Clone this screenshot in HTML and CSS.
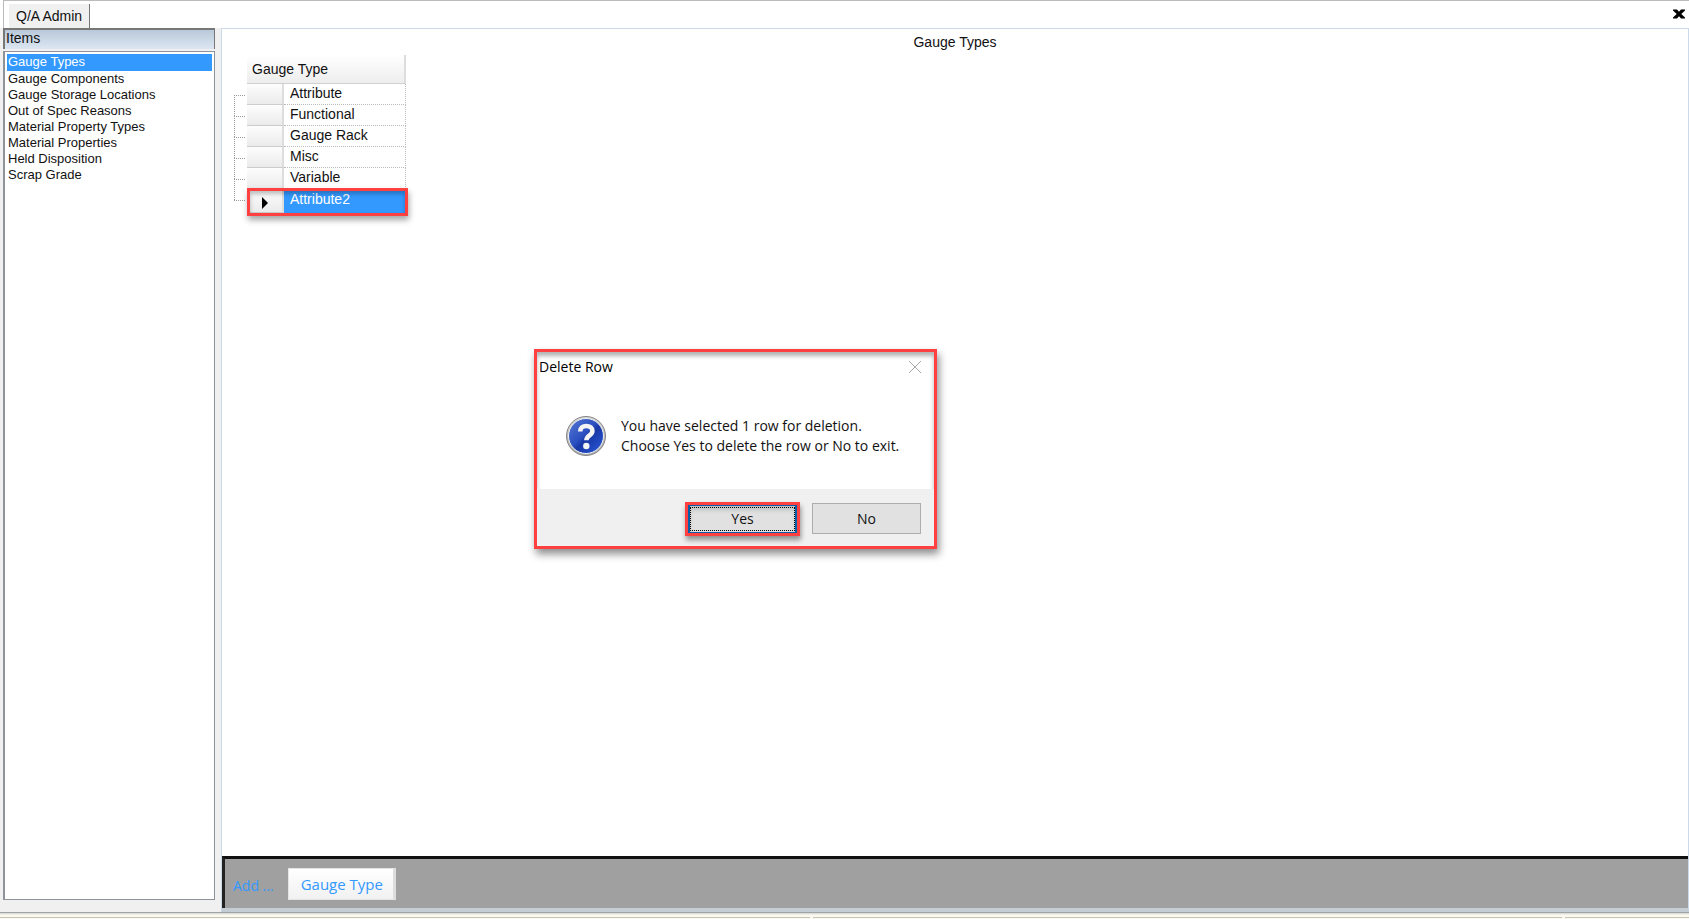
FILE: index.html
```html
<!DOCTYPE html>
<html lang="en">
<head>
<meta charset="utf-8">
<title>Q/A Admin</title>
<link rel="stylesheet" href="styles.css">
</head>
<body>
<div class="app">
  <header class="tabs">
    <button class="tab" type="button">Q/A Admin</button>
    <button class="close" type="button" aria-label="Close tab">
      <svg width="12" height="10" viewBox="0 0 12 10"><path d="M0 .5h4l2 2.300L8 .5h4v1L8.300 5 12 8.500v1H8L6 7.200 4 9.500H0v-1L3.700 5 0 1.500z" fill="#000"/></svg>
    </button>
  </header>
  <div class="body">
    <aside class="sidebar">
      <h2 class="items-title">Items</h2>
      <nav class="items">
        <a class="item selected" href="#">Gauge Types</a>
        <a class="item" href="#">Gauge Components</a>
        <a class="item" href="#">Gauge Storage Locations</a>
        <a class="item" href="#">Out of Spec Reasons</a>
        <a class="item" href="#">Material Property Types</a>
        <a class="item" href="#">Material Properties</a>
        <a class="item" href="#">Held Disposition</a>
        <a class="item" href="#">Scrap Grade</a>
      </nav>
    </aside>
    <main class="main">
      <h1 class="title">Gauge Types</h1>
      <div class="sheet">
        <table class="grid">
          <thead>
            <tr><td class="tree-head"></td><th colspan="2" scope="col">Gauge Type</th></tr>
          </thead>
          <tbody>
            <tr><td class="tree"></td><td class="handle"></td><td class="cell">Attribute</td></tr>
            <tr><td class="tree"></td><td class="handle"></td><td class="cell">Functional</td></tr>
            <tr><td class="tree"></td><td class="handle"></td><td class="cell">Gauge Rack</td></tr>
            <tr><td class="tree"></td><td class="handle"></td><td class="cell">Misc</td></tr>
            <tr><td class="tree"></td><td class="handle"></td><td class="cell">Variable</td></tr>
            <tr class="current"><td class="tree"></td><td class="handle"><svg width="6" height="12" viewBox="0 0 6 12"><path d="M0 0l6 6-6 6z" fill="#000"/></svg></td><td class="cell">Attribute2</td></tr>
          </tbody>
        </table>
      </div>
      <footer class="addbar">
        <span class="add-label">Add ...</span>
        <button class="add-button" type="button">Gauge Type</button>
      </footer>
    </main>
  </div>
  <div class="status"><span class="pane wide"></span><span class="pane middle"></span><span class="pane small"></span></div>
</div>
<section class="dialog" role="dialog" aria-labelledby="dialog-title">
  <div class="dialog-bar">
    <h2 class="dialog-title" id="dialog-title">Delete Row</h2>
    <button class="dialog-close" type="button" aria-label="Close">
      <svg width="14" height="14" viewBox="0 0 14 14"><path d="M1 1l12 12M13 1L1 13" stroke="#aaa" fill="none"/></svg>
    </button>
  </div>
  <div class="dialog-body">
    <svg width="42" height="42" viewBox="0 0 42 42">
      <defs>
        <linearGradient id="ball" x1="0" y1="0" x2="1" y2="1"><stop offset="0" stop-color="#5579d2"/><stop offset=".45" stop-color="#2b4fc0"/><stop offset=".55" stop-color="#1838a4"/><stop offset="1" stop-color="#2c5be0"/></linearGradient>
        <linearGradient id="rim" x1="0" y1="0" x2="0" y2="1"><stop offset="0" stop-color="#d9d9d9"/><stop offset="1" stop-color="#a9a9a9"/></linearGradient>
      </defs>
      <circle cx="21" cy="21" r="19.500" fill="url(#rim)" stroke="#858585"/>
      <circle cx="21" cy="21" r="17.500" fill="url(#ball)" stroke="#f2f2f2" stroke-width="1"/>
      <path d="M15.200 16.500c0-4 2.800-5.500 6-5.500 3.800 0 6.200 2 6.200 5 0 4.500-6 4.300-6 9.300" fill="none" stroke="#f4f4f4" stroke-width="4.600"/>
      <circle cx="21.300" cy="31" r="3.200" fill="#f4f4f4"/>
    </svg>
    <p class="message">You have selected 1 row for deletion.<br>Choose Yes to delete the row or No to exit.</p>
  </div>
  <div class="dialog-actions">
    <div class="callout"><button class="button yes" type="button">Yes</button></div>
    <button class="button no" type="button">No</button>
  </div>
</section>
</body>
</html>
```
FILE: styles.css
```css
* { box-sizing: border-box; }
body {
  margin: 0;
  font: 14px/16px "Liberation Sans", Arial, sans-serif;
  color: #111;
  background: #fff;
}
h1, h2, p { margin: 0; font-size: inherit; font-weight: normal; }
button { margin: 0; padding: 0; font: inherit; color: inherit; border: 0; background: none; }
svg { display: block; }

.app { display: flex; flex-direction: column; height: 100vh; overflow: hidden; }

.tabs {
  display: flex;
  justify-content: space-between;
  align-items: center;
  flex: none;
  height: 28px;
  margin-left: 3px;
  padding: 0 4px 2px 5px;
  border-top: 1px solid #bbb;
  border-left: 1px solid #bbb;
}
.tab {
  align-self: flex-end;
  height: 24px;
  margin-bottom: -2px;
  padding: 0 7px 1px;
  background: #f0f0f0;
  border-right: 1px solid #777;
}

.body { display: flex; flex: 1; min-height: 0; background: #f0f0f0; border-bottom: 1px solid #a0a4a8; }
.sidebar {
  display: flex;
  flex-direction: column;
  flex: none;
  gap: 2px;
  width: 212px;
  margin: 0 6px 12px 3px;
}
.items-title {
  height: 21px;
  padding: 0 1px;
  background: linear-gradient(#b9c9d9, #dce6f2);
  border: 2px solid #777;
  border-width: 2px 1px 0 2px;
}
.items {
  flex: 1;
  padding: 2px;
  font-size: 13px;
  background: #fff;
  border: 1px solid #8e9299;
  border-width: 1px 1px 1px 2px;
}
.item { display: block; padding-left: 1px; color: #111; text-decoration: none; }
.item.selected { padding-bottom: 1px; color: #fff; background: #3399ff; }

.main {
  display: flex;
  flex-direction: column;
  flex: 1;
  background: #fff;
  border: 1px solid #cbd9e8;
  border-bottom: 4px solid #c4ccd4;
}
.title { padding-top: 5px; text-align: center; }
.sheet { flex: 1; padding: 5px 12px; }

.grid { border-collapse: separate; border-spacing: 0; }
.grid td, .grid th { padding: 0; }
.tree-head, .tree { width: 13px; }
.grid th {
  height: 29px;
  padding-left: 5px;
  text-align: left;
  font-weight: normal;
  background: linear-gradient(#fff, #ededed);
  border-right: 2px solid #ddd;
  border-bottom: 1px solid #d0d0d0;
}
.grid tbody tr { height: 21px; }
.tree { position: relative; }
.tree::before { content: ""; position: absolute; left: 0; top: 11px; width: 11px; border-top: 1px dotted #999; }
.tree::after { content: ""; position: absolute; left: 0; top: 11px; height: 21px; border-left: 1px dotted #999; }
.current .tree::after { display: none; }
.handle {
  width: 37px;
  background: linear-gradient(#fdfdfd, #ebebeb);
  border-right: 2px solid #ddd;
  border-bottom: 1px solid #ccc;
}
.handle svg { margin: 4px 0 0 15px; }
.grid .cell {
  width: 122px;
  padding: 0 0 3px 6px;
  border-right: 1px dotted #bbb;
  border-bottom: 1px dotted #bbb;
}
.grid .current { position: relative; height: 24px; color: #fff; }
.grid .current .cell { padding-bottom: 4px; background: #3399ff; border-color: #3399ff; }
.current::after {
  content: "";
  position: absolute;
  left: 13px;
  right: -2px;
  top: -1px;
  bottom: -3px;
  border: 3px solid #ff4040;
  box-shadow: 1px 4px 6px rgba(0, 0, 0, .35), inset 0 3px 4px rgba(0, 0, 0, .25);
}

.addbar {
  display: flex;
  align-items: center;
  gap: 14px;
  height: 52px;
  padding: 1px 8px 0;
  font: 15px/20px Roboto, sans-serif;
  color: #3399ff;
  background: #a0a0a0;
  border-top: 3px solid #111;
  border-left: 3px solid #222;
}
.add-label { padding-top: 3px; font-size: 14px; font-family: "Open Sans", sans-serif; }
.add-button {
  height: 32px;
  padding: 0 10px 0 12px;
  font: 15px/20px "Open Sans", sans-serif;
  background: linear-gradient(#fff, #f1f1f1);
  border: 1px solid #e4e4e4;
  border-right: 3px solid #ddd;
}

.status { display: flex; gap: 3px; flex: none; height: 6px; padding-top: 4px; background: linear-gradient(#d3d3cb, #f9f9f2 2px); }
.pane { border-top: 1px solid #c8c6b2; }
.wide { flex: 810; }
.middle { flex: 750; }
.small { flex: 124; }

.dialog {
  position: absolute;
  left: 534px;
  top: 349px;
  width: 403px;
  font: 14px/20px "Open Sans", "Segoe UI", sans-serif;
  background: #fff;
  border: 3px solid #ff4040;
  box-shadow: 2px 5px 8px rgba(0, 0, 0, .45), inset 0 4px 4px rgba(0, 0, 0, .3);
}
.dialog-bar { display: flex; justify-content: space-between; padding: 5px 12px 0 2px; }
.dialog-title { color: #000; }
.dialog-close { padding: 3px 0; }
.dialog-body { display: flex; align-items: center; gap: 14px; height: 112px; padding: 5px 28px 0; }
.message { white-space: nowrap; }
.dialog-actions {
  display: flex;
  justify-content: flex-end;
  align-items: center;
  gap: 12px;
  height: 57px;
  padding: 2px 13px 0 0;
  background: #f0f0f0;
}
.button { width: 109px; height: 31px; background: #e1e1e1; border: 1px solid #adadad; }
.callout { border: 3px solid #ff4040; box-shadow: 1px 4px 5px rgba(0, 0, 0, .4); }
.yes {
  display: block;
  height: 28px;
  border: 2px solid #0a5ea8;
  border-width: 1px 2px;
  outline: 1px dotted #000;
  outline-offset: -3px;
  box-shadow: inset 0 4px 4px rgba(0, 0, 0, .15);
}
```
